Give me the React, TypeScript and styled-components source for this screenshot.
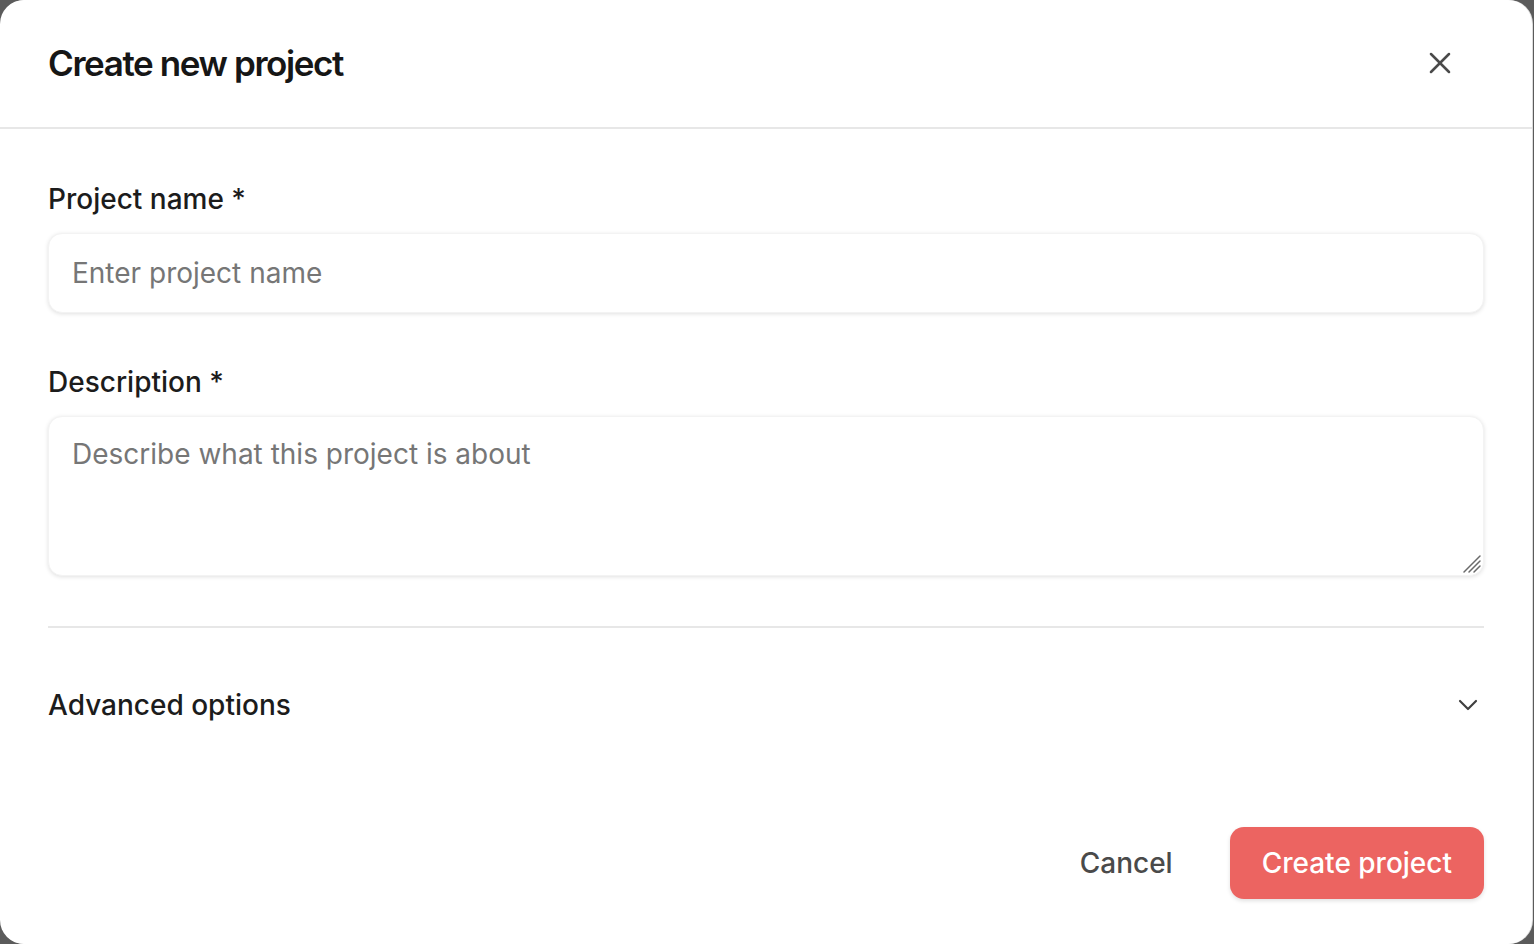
import styled, { createGlobalStyle } from "styled-components";

const GlobalStyle = createGlobalStyle`
  html, body {
    margin: 0;
    padding: 0;
    background: #5b5b5b;
    overflow: hidden;
  }
  body {
    font-family: Inter, "Noto Sans", sans-serif;
  }
`;

const CloseIcon = () => (
  <svg width="36" height="36" viewBox="0 0 24 24" fill="none" stroke="currentColor" strokeWidth="1.7" strokeLinecap="round">
    <path d="M18 6 6 18" />
    <path d="m6 6 12 12" />
  </svg>
);

const ChevronIcon = () => (
  <svg width="32" height="32" viewBox="0 0 24 24" fill="none" stroke="currentColor" strokeWidth="1.6" strokeLinecap="round" strokeLinejoin="round">
    <path d="m6 9 6 6 6-6" />
  </svg>
);

const ResizeGrip = () => (
  <svg width="22" height="22" viewBox="0 0 22 22" stroke="#6a6a6a" strokeWidth="1.5" strokeLinecap="round">
    <path d="M3 19 19 3" />
    <path d="M8 19 19 8" />
    <path d="M13 19 19 13" />
  </svg>
);

export default function App() {
  return (
    <>
      <GlobalStyle />
      <Modal>
        <Header>
          <Title>Create new project</Title>
          <CloseButton aria-label="Close">
            <CloseIcon />
          </CloseButton>
        </Header>
        <Body>
          <Field>
            <Label>Project name *</Label>
            <Input placeholder="Enter project name" />
          </Field>
          <Field>
            <Label>Description *</Label>
            <AreaWrap>
              <TextArea placeholder="Describe what this project is about" />
              <Grip>
                <ResizeGrip />
              </Grip>
            </AreaWrap>
          </Field>
          <Divider />
          <AdvancedRow>
            <AdvancedLabel>Advanced options</AdvancedLabel>
            <ChevronWrap>
              <ChevronIcon />
            </ChevronWrap>
          </AdvancedRow>
        </Body>
        <Footer>
          <GhostButton>Cancel</GhostButton>
          <PrimaryButton>Create project</PrimaryButton>
        </Footer>
      </Modal>
    </>
  );
}

const Modal = styled.div`
  width: 1532px;
  height: 944px;
  background: #ffffff;
  border-radius: 24px;
  box-shadow: 1px 0 0 #dcdcdc;
  display: flex;
  flex-direction: column;
  box-sizing: border-box;
`;

const Header = styled.div`
  height: 129px;
  box-sizing: border-box;
  border-bottom: 2px solid #e7e7e7;
  display: flex;
  align-items: center;
  justify-content: space-between;
  padding: 0 72px 2px 48px;
`;

const Title = styled.h1`
  margin: 0;
  font-size: 35px;
  font-weight: 600;
  letter-spacing: -0.04em;
  color: #161616;
`;

const CloseButton = styled.button`
  all: unset;
  width: 40px;
  height: 40px;
  display: flex;
  align-items: center;
  justify-content: center;
  color: #4a4a4a;
  cursor: pointer;
`;

const Body = styled.div`
  padding: 53px 48px 0;
  display: flex;
  flex-direction: column;
`;

const Field = styled.div`
  display: flex;
  flex-direction: column;
  gap: 16px;
  margin-bottom: 52px;
`;

const Label = styled.label`
  font-size: 28px;
  line-height: 35px;
  font-weight: 500;
  color: #1c1c1c;
`;

const fieldBase = `
  box-sizing: border-box;
  width: 100%;
  border: 1px solid #f3f3f3;
  border-radius: 14px;
  background: #ffffff;
  box-shadow: 0 1px 4px rgba(0, 0, 0, 0.12);
  font-family: Inter, "Noto Sans", sans-serif;
  font-size: 28px;
  color: #1c1c1c;
  padding: 0 23px;
  outline: none;
  &::placeholder {
    color: #767676;
  }
`;

const Input = styled.input`
  ${fieldBase}
  height: 80px;
`;

const AreaWrap = styled.div`
  position: relative;
  display: flex;
`;

const TextArea = styled.textarea`
  ${fieldBase}
  height: 160px;
  padding-top: 20px;
  line-height: 34px;
  resize: none;
`;

const Grip = styled.span`
  position: absolute;
  right: 1px;
  bottom: 1px;
  display: flex;
  pointer-events: none;
`;

const Divider = styled.hr`
  margin: -2px 0 0;
  border: none;
  height: 2px;
  background: #e7e7e7;
`;

const AdvancedRow = styled.div`
  display: flex;
  align-items: center;
  justify-content: space-between;
  height: 154px;
`;

const AdvancedLabel = styled.span`
  font-size: 28px;
  font-weight: 500;
  color: #1c1c1c;
`;

const ChevronWrap = styled.span`
  display: flex;
  color: #3f3f3f;
`;

const Footer = styled.div`
  margin-top: auto;
  display: flex;
  justify-content: flex-end;
  align-items: center;
  gap: 25px;
  padding: 0 48px 45px;
`;

const GhostButton = styled.button`
  all: unset;
  font-family: Inter, "Noto Sans", sans-serif;
  font-size: 28px;
  font-weight: 500;
  color: #4a4a4a;
  padding: 0 32px;
  cursor: pointer;
`;

const PrimaryButton = styled.button`
  all: unset;
  height: 72px;
  padding: 0 32px;
  border-radius: 14px;
  background: #ec6461;
  color: #ffffff;
  font-family: Inter, "Noto Sans", sans-serif;
  font-size: 28px;
  font-weight: 500;
  display: flex;
  align-items: center;
  box-shadow: 0 2px 4px rgba(0, 0, 0, 0.12);
  cursor: pointer;
`;
